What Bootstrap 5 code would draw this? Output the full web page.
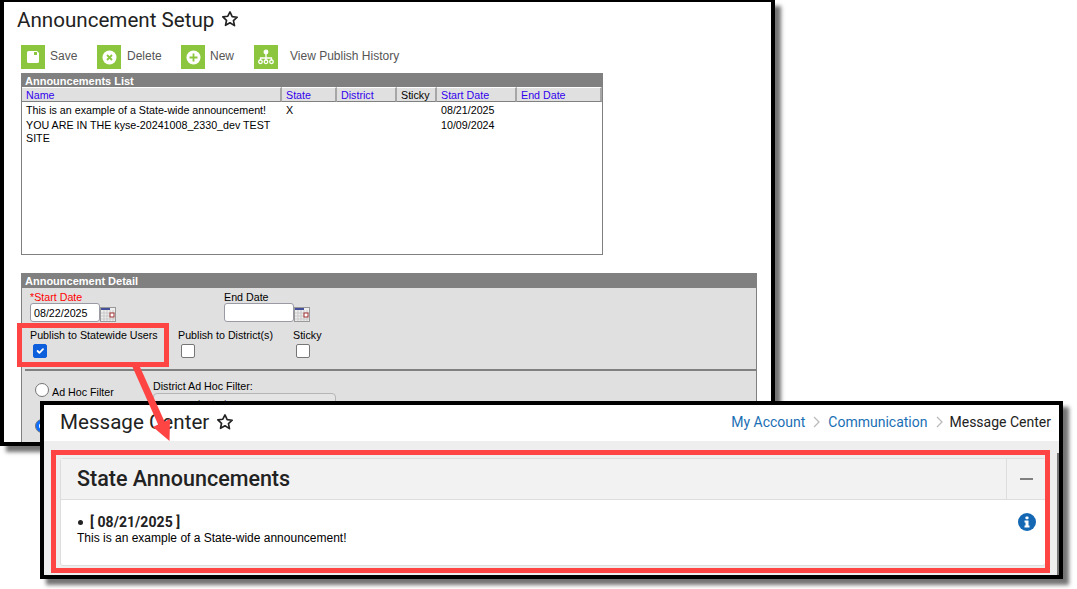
<!DOCTYPE html>
<html lang="en">
<head>
<meta charset="utf-8">
<title>Announcement Setup</title>
<link href="https://cdn.jsdelivr.net/npm/bootstrap@5.3.0/dist/css/bootstrap.min.css" rel="stylesheet">
<style>
html,body{margin:0;height:589px;overflow:hidden;background:#fff}
body{position:relative;width:1077px;font-family:"Liberation Sans",Arial,sans-serif;color:#000}
.shot{position:absolute;background:#fff;border:4px solid #000;box-shadow:6px 6px 4px rgba(0,0,0,.55);overflow:hidden}
.shot-a{left:0;top:0;width:775px;height:446px;border-top-width:2px}
.shot-b{left:40px;top:401px;width:1023px;height:178px;background:#eee}
.page-title{font-family:Roboto,sans-serif;font-size:20.6px;line-height:24px;color:#222;margin:0;font-weight:400}
.head-a{height:43px;padding:6px 0 0 13px}
.star{margin-left:-1px}
.star-a{margin-top:2px}
.tool-ico{width:24px;height:24px;background:#8cc63f;flex:none}
.tool-lbl{font-size:12px;color:#555;line-height:20px;flex:none;padding-bottom:2px}
.lbl-save{width:47px;margin-left:5px}
.lbl-delete{width:54px;margin-left:6px}
.lbl-new{width:44px;margin-left:5px}
.lbl-history{margin-left:12px}
.toolbar{height:24px;margin:0 0 4px 17px}
.list-box{width:582px;height:182px;margin-left:17px;border:1px solid #808080;border-top:0}
.bar-gray{background:#808080;color:#fff;font-weight:700;font-size:11px;line-height:14px;height:14px;padding:1px 0 0 4px;margin:0 -1px}
.grid-tbl{table-layout:fixed;width:580px;font-size:10.7px;line-height:13px;margin:0;border-collapse:separate;border-spacing:0}
.grid-tbl th{background:#e0e0e0;font-weight:400;color:#3300ee;height:15px;padding:1px 4px 0;border-top:1px solid #fff;border-bottom:1px solid #808080;border-right:2px solid #a6a6a6;line-height:12px}
.grid-tbl th.plain{color:#000}
.grid-tbl td{padding:2px 4px 0;vertical-align:top}
.detail{width:736px;height:170px;margin:18px 0 0 17px;background:#e0e0e0;border-left:1px solid #808080;border-right:1px solid #808080}
.detail .bar-gray{height:15px;line-height:15px}
.row-dates{padding:3px 0 0 8px;height:35px}
.row-flags{padding:6px 0 0 8px;height:46px}
.row-filter{padding:9px 0 0 13px}
.col-start{width:194px}
.col-state{width:148px}
.col-district{width:115px}
.col-adhoc{width:118px}
.fld-lbl{font-size:10.7px;line-height:12px;color:#000}
.req{color:#f00}
.txt-in{width:70px;height:19px;border:1px solid #9a9aa5;border-radius:3px;background:#fff;font-size:10.7px;line-height:18px;padding-left:3px}
.cal{flex:none;margin-top:4px}
.form-check-input.cb{width:14px;height:14px;margin:3px 0 0 3px;border-color:#767676;border-radius:2px;float:none;display:block}
.form-check-input.cb:checked{background-color:#0d5fdc;border-color:#0d5fdc}
.form-check-input.rad{width:14px;height:14px;margin:0;flex:none;border-color:#767676}
.radio-one{margin-top:3px;gap:3px}
.radio-one .fld-lbl{margin-top:3px}
.form-check-input.rad-two{margin-top:21px;display:block}
.sep{height:2px;background:#808080;margin:0 0 0 3px}
.filter-box{width:183px;height:24px;border:1px solid #b5b5b5;border-radius:4px;background:#e4e4e4;font-size:10.7px;color:#555;padding:2px 0 0 6px;margin-top:1px}
.head-b{height:36px;background:#fff;padding:0 8px 2px 16px}
.crumbs{font-family:Roboto,sans-serif;font-size:14px;color:#222;gap:8px}
.crumbs a{color:#1a6fb5;text-decoration:none}
.crumb-last{margin-left:-1px}
.panel{position:absolute;left:16px;top:53px;width:986px;height:108px;background:#fff;border:1px solid #ddd;border-radius:3px}
.panel-head{height:41px;background:#f2f2f2;border-bottom:1px solid #ddd}
.panel-title{font-family:Roboto,sans-serif;font-weight:500;font-size:21.5px;line-height:40px;color:#222;margin:0;padding-left:16px}
.panel-tool{width:39px;border-left:1px solid #ddd}
.minus{width:13px;height:2px;background:#808080;display:block}
.panel-body{padding:14px 9px 0 16px}
.ann-date{font-family:Roboto,sans-serif;font-weight:700;font-size:14px;line-height:16px;color:#222;letter-spacing:.06px}
.ann-dot{width:5px;height:5px;background:#222;border-radius:50%;margin:0 7px 0 1px}
.ann-text{font-size:12px;line-height:15px;margin-top:1px}
.info-ico{margin-top:-1px}
.scroll-edge{position:absolute;right:0;top:48px;bottom:0;width:2px;background:#777}
.mark-rect{position:absolute;border:5px solid #ff4444;pointer-events:none}
.mr-a{left:17px;top:323px;width:152px;height:44px}
.mr-b{left:51px;top:450px;width:999px;height:123px}
.arrow{position:absolute;left:125px;top:360px}
</style>
</head>
<body>

<section class="shot shot-a">
  <div class="head-a d-flex align-items-start gap-2">
    <h1 class="page-title">Announcement Setup</h1>
    <svg class="star star-a" width="18" height="18" viewBox="0 0 24 24" fill="none" stroke="#222" stroke-width="2.2" stroke-linejoin="round"><path d="M12 2.600l2.900 6.200 6.700.8-5 4.600 1.400 6.700L12 17l-6 3.400 1.400-6.700-5-4.600 6.700-.8z"/></svg>
  </div>
  <div class="toolbar d-flex align-items-center">
    <span class="tool-ico d-flex align-items-center justify-content-center">
      <svg width="14" height="14" viewBox="0 0 14 14"><path d="M1 2.500A1.500 1.500 0 0 1 2.500 1H11l2 2v8.500a1.500 1.500 0 0 1-1.500 1.500h-9A1.500 1.500 0 0 1 1 11.500z" fill="#fff"/><rect x="8" y="2" width="3" height="3" fill="#8cc63f"/></svg>
    </span>
    <span class="tool-lbl lbl-save">Save</span>
    <span class="tool-ico d-flex align-items-center justify-content-center">
      <svg width="15" height="15" viewBox="0 0 15 15"><circle cx="7.500" cy="7.500" r="7" fill="#fff"/><path d="M5 5l5 5M10 5l-5 5" stroke="#8cc63f" stroke-width="1.800"/></svg>
    </span>
    <span class="tool-lbl lbl-delete">Delete</span>
    <span class="tool-ico d-flex align-items-center justify-content-center">
      <svg width="15" height="15" viewBox="0 0 15 15"><circle cx="7.500" cy="7.500" r="7" fill="#fff"/><path d="M7.500 3.500v8M3.500 7.500h8" stroke="#8cc63f" stroke-width="1.800"/></svg>
    </span>
    <span class="tool-lbl lbl-new">New</span>
    <span class="tool-ico d-flex align-items-center justify-content-center">
      <svg width="16" height="16" viewBox="0 0 16 16" fill="none" stroke="#fff" stroke-width="1.300"><circle cx="8" cy="3" r="1.800" fill="#fff"/><path d="M8 5v4M2.500 11V9h11v2M8 9v2"/><circle cx="2.500" cy="12.800" r="1.800"/><circle cx="8" cy="12.800" r="1.800"/><circle cx="13.500" cy="12.800" r="1.800"/></svg>
    </span>
    <span class="tool-lbl lbl-history">View Publish History</span>
  </div>

  <div class="list-box">
    <div class="bar-gray">Announcements List</div>
    <table class="grid-tbl">
      <colgroup><col style="width:260px"><col style="width:55px"><col style="width:60px"><col style="width:40px"><col style="width:80px"><col style="width:85px"></colgroup>
      <thead><tr><th>Name</th><th>State</th><th>District</th><th class="plain">Sticky</th><th>Start Date</th><th>End Date</th></tr></thead>
      <tbody>
        <tr><td>This is an example of a State-wide announcement!</td><td>X</td><td></td><td></td><td>08/21/2025</td><td></td></tr>
        <tr><td>YOU ARE IN THE kyse-20241008_2330_dev TEST SITE</td><td></td><td></td><td></td><td>10/09/2024</td><td></td></tr>
      </tbody>
    </table>
  </div>

  <div class="detail">
    <div class="bar-gray">Announcement Detail</div>
    <div class="row-dates d-flex">
      <div class="col-start">
        <div class="fld-lbl"><span class="req">*Start Date</span></div>
        <div class="d-flex">
          <div class="txt-in">08/22/2025</div>
          <svg class="cal" width="16" height="15" viewBox="0 0 16 15"><rect x=".5" y=".5" width="15" height="14" fill="#eee" stroke="#999"/><rect x="1" y="1" width="9" height="2" fill="#44509a"/><path d="M1 6h14M1 9h14M1 12h14M4 3v11M7 3v11M10 3v11M13 3v11" stroke="#c9c9c9"/><rect x="10" y="6" width="4" height="4" fill="#fff" stroke="#a03030"/></svg>
        </div>
      </div>
      <div>
        <div class="fld-lbl">End Date</div>
        <div class="d-flex">
          <div class="txt-in"></div>
          <svg class="cal" width="16" height="15" viewBox="0 0 16 15"><rect x=".5" y=".5" width="15" height="14" fill="#eee" stroke="#999"/><rect x="1" y="1" width="9" height="2" fill="#44509a"/><path d="M1 6h14M1 9h14M1 12h14M4 3v11M7 3v11M10 3v11M13 3v11" stroke="#c9c9c9"/><rect x="10" y="6" width="4" height="4" fill="#fff" stroke="#a03030"/></svg>
        </div>
      </div>
    </div>
    <div class="row-flags d-flex">
      <div class="col-state"><div class="fld-lbl">Publish to Statewide Users</div><input class="form-check-input cb" type="checkbox" checked aria-label="Publish to Statewide Users"></div>
      <div class="col-district"><div class="fld-lbl">Publish to District(s)</div><input class="form-check-input cb" type="checkbox" aria-label="Publish to District(s)"></div>
      <div><div class="fld-lbl">Sticky</div><input class="form-check-input cb" type="checkbox" aria-label="Sticky"></div>
    </div>
    <div class="sep"></div>
    <div class="row-filter d-flex">
      <div class="col-adhoc">
        <div class="radio-one d-flex align-items-start"><input class="form-check-input rad" type="radio" name="flt" aria-label="Ad Hoc Filter"><span class="fld-lbl">Ad Hoc Filter</span></div>
        <input class="form-check-input rad rad-two" type="radio" name="flt" checked aria-label="Other filter">
      </div>
      <div>
        <div class="fld-lbl">District Ad Hoc Filter:</div>
        <div class="filter-box">none selected</div>
      </div>
    </div>
  </div>
</section>

<section class="shot shot-b">
  <div class="head-b d-flex align-items-center justify-content-between">
    <div class="d-flex align-items-center gap-2">
      <h2 class="page-title">Message Center</h2>
      <svg class="star" width="18" height="18" viewBox="0 0 24 24" fill="none" stroke="#222" stroke-width="2.2" stroke-linejoin="round"><path d="M12 2.600l2.900 6.200 6.700.8-5 4.600 1.400 6.700L12 17l-6 3.400 1.400-6.700-5-4.600 6.700-.8z"/></svg>
    </div>
    <nav class="crumbs d-flex align-items-center" aria-label="breadcrumb">
      <a href="#">My Account</a>
      <svg width="7" height="12" viewBox="0 0 7 12" fill="none" stroke="#bbb" stroke-width="1.300"><path d="M1 1l5 5-5 5"/></svg>
      <a href="#">Communication</a>
      <svg width="7" height="12" viewBox="0 0 7 12" fill="none" stroke="#bbb" stroke-width="1.300"><path d="M1 1l5 5-5 5"/></svg>
      <span class="crumb-last">Message Center</span>
    </nav>
  </div>
  <div class="panel">
    <div class="panel-head d-flex justify-content-between">
      <h3 class="panel-title">State Announcements</h3>
      <div class="panel-tool d-flex align-items-center justify-content-center"><span class="minus"></span></div>
    </div>
    <div class="panel-body d-flex justify-content-between">
      <div>
        <div class="ann-date d-flex align-items-center"><span class="ann-dot"></span>[ 08/21/2025 ]</div>
        <div class="ann-text">This is an example of a State-wide announcement!</div>
      </div>
      <svg class="info-ico" width="18" height="18" viewBox="0 0 18 18"><circle cx="9" cy="9" r="9" fill="#1467b3"/><rect x="7.500" y="3.500" width="3" height="2.800" rx=".8" fill="#fff"/><path d="M6.500 7.500h4v5h1v2h-5v-2h1v-3h-1z" fill="#fff"/></svg>
    </div>
  </div>
  <div class="scroll-edge"></div>
</section>

<div class="mark-rect mr-a"></div>
<div class="mark-rect mr-b"></div>
<svg class="arrow" width="60" height="90" viewBox="0 0 60 90"><path d="M7.500 7H15l24.500 54.500L45 59l-.5 22L28 67l5.100-2.500z" fill="#ff4444"/></svg>

<script src="https://cdn.jsdelivr.net/npm/bootstrap@5.3.0/dist/js/bootstrap.bundle.min.js"></script>
</body>
</html>
